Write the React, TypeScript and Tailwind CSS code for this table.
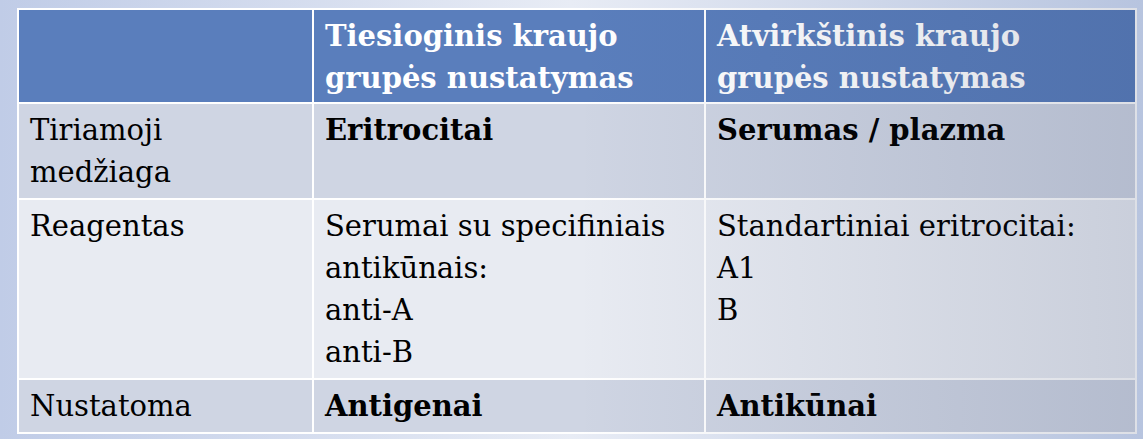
import React from "react";

const rows = [
  { label: ["Tiriamoji", "medžiaga"], a: ["Eritrocitai"], b: ["Serumas / plazma"], bold: true, shade: "bg-[#cfd5e3]" },
  {
    label: ["Reagentas"],
    a: ["Serumai su specifiniais", "antikūnais:", "anti-A", "anti-B"],
    b: ["Standartiniai eritrocitai:", "A1", "B"],
    bold: false,
    shade: "bg-[#e8ebf2]",
  },
  { label: ["Nustatoma"], a: ["Antigenai"], b: ["Antikūnai"], bold: true, shade: "bg-[#cfd5e3]" },
];

function Lines({ lines }: { lines: string[] }) {
  return (
    <>
      {lines.map((l, i) => (
        <div key={i}>{l}</div>
      ))}
    </>
  );
}

export default function App() {
  return (
    <div
      className="w-[1143px] h-[439px] overflow-hidden bg-gradient-to-r from-[#c0cce7] via-[#e8ecf5] to-[#b7c4df] pl-[17px] pt-[8px] text-[29px] leading-[42px] text-black"
      style={{ fontFamily: '"DejaVu Serif", serif' }}
    >
      <div className="relative w-[1120px]">
        <table className="w-full border-collapse">
          <colgroup>
            <col className="w-[295px]" />
            <col className="w-[392px]" />
            <col />
          </colgroup>
          <thead>
            <tr className="bg-[#5a7ebc] text-white font-bold">
              <th className="border-2 border-white"></th>
              <th className="border-2 border-white px-[11px] pt-[5px] pb-[3px] text-left align-top font-bold">
                <Lines lines={["Tiesioginis kraujo", "grupės nustatymas"]} />
              </th>
              <th className="border-2 border-white px-[11px] pt-[5px] pb-[3px] text-left align-top font-bold">
                <Lines lines={["Atvirkštinis kraujo", "grupės nustatymas"]} />
              </th>
            </tr>
          </thead>
          <tbody>
            {rows.map((r, i) => (
              <tr key={i} className={r.shade}>
                <td className="border-2 border-white px-[11px] pt-[5px] pb-[5px] align-top">
                  <Lines lines={r.label} />
                </td>
                <td className={`border-2 border-white px-[11px] pt-[5px] pb-[5px] align-top ${r.bold ? "font-bold" : ""}`}>
                  <Lines lines={r.a} />
                </td>
                <td className={`border-2 border-white px-[11px] pt-[5px] pb-[5px] align-top ${r.bold ? "font-bold" : ""}`}>
                  <Lines lines={r.b} />
                </td>
              </tr>
            ))}
          </tbody>
        </table>
        <div className="pointer-events-none absolute inset-0 bg-gradient-to-r from-transparent via-transparent to-[#1e2f5a]/15" />
      </div>
    </div>
  );
}
